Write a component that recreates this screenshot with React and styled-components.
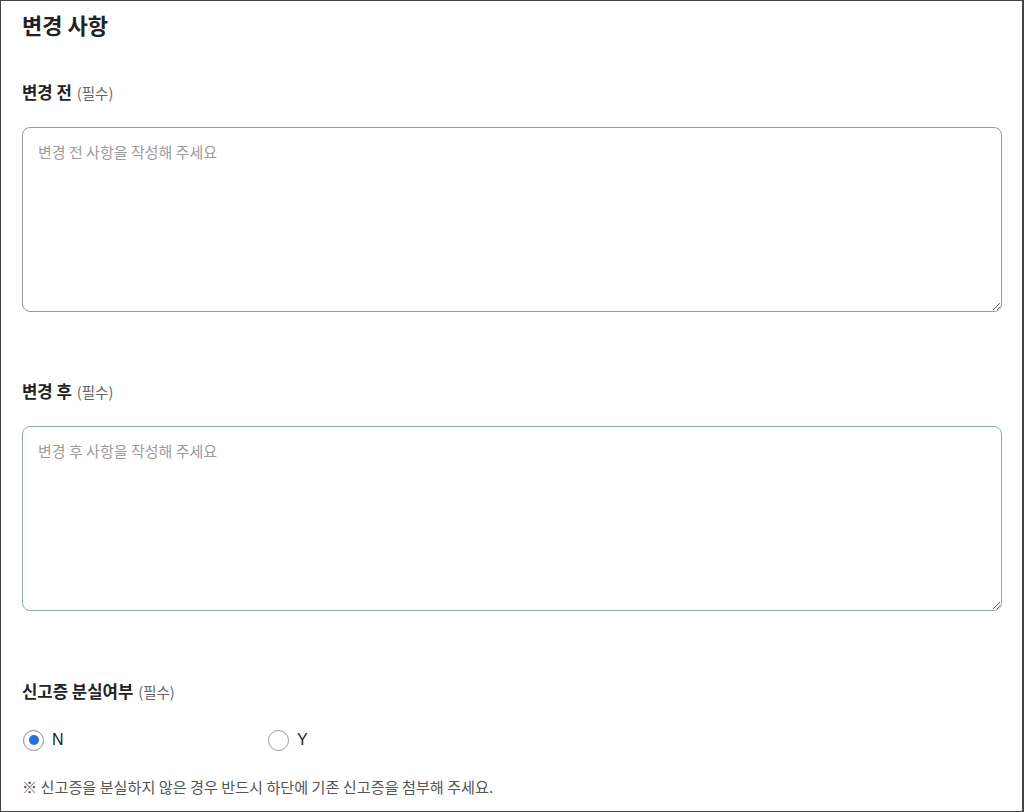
import React, { useState } from "react";
import styled, { createGlobalStyle } from "styled-components";

const GlobalStyle = createGlobalStyle`
  html, body {
    margin: 0;
    padding: 0;
    background: #fff;
  }
  * {
    box-sizing: border-box;
  }
  body {
    font-family: "Noto Sans CJK KR", "Noto Sans", "Liberation Sans", sans-serif;
    color: #222;
  }
`;

const Frame = styled.div`
  width: 1024px;
  height: 812px;
  border: 1px solid #444;
  border-right-width: 2px;
  padding: 9px 20px 0 21px;
  overflow: hidden;
`;

const Title = styled.h2`
  margin: 0;
  font-size: 22px;
  line-height: 28px;
  font-weight: 700;
  color: #222;
`;

const Field = styled.div`
  margin-top: ${(p) => p.$top}px;
`;

const Label = styled.div`
  font-size: 16.7px;
  line-height: 20px;
  font-weight: 700;
  color: #222;
`;

const Required = styled.span`
  font-size: 14.5px;
  font-weight: 400;
  color: #666;
  margin-left: 5px;
`;

const TextArea = styled.textarea`
  display: block;
  width: 980px;
  height: 185px;
  margin-top: 24px;
  padding: 14px 15px;
  border: 1px solid ${(p) => (p.$active ? "#8aa6bc" : "#9a9a9a")};
  border-radius: 8px;
  font-family: inherit;
  font-size: 15px;
  line-height: 20px;
  color: #222;
  resize: vertical;
  outline: none;

  &::placeholder {
    color: #9b9b9b;
  }
`;

const RadioRow = styled.div`
  display: grid;
  grid-template-columns: 245px 245px;
  margin-top: 28px;
`;

const RadioOption = styled.label`
  display: flex;
  align-items: center;
  gap: 8px;
  height: 20px;
  padding-left: 1px;
  font-family: "Liberation Sans", "Noto Sans CJK KR", sans-serif;
  font-size: 16px;
  color: #222;
  cursor: pointer;
`;

const Circle = styled.span`
  width: 21px;
  height: 21px;
  border-radius: 50%;
  border: 1px solid ${(p) => (p.$checked ? "#7c8aa0" : "#9a9a9a")};
  display: flex;
  align-items: center;
  justify-content: center;
  background: #fff;

  &::after {
    content: "";
    width: 10px;
    height: 10px;
    border-radius: 50%;
    background: ${(p) => (p.$checked ? "#2d6ed8" : "transparent")};
  }
`;

const HiddenInput = styled.input`
  display: none;
`;

const Note = styled.p`
  margin: 26px 0 0;
  font-size: 15.15px;
  line-height: 20px;
  color: #555;
`;

export default function App() {
  const [lost, setLost] = useState("N");

  return (
    <>
      <GlobalStyle />
      <Frame>
        <Title>변경 사항</Title>

        <Field $top={44}>
          <Label>
            변경 전<Required>(필수)</Required>
          </Label>
          <TextArea placeholder="변경 전 사항을 작성해 주세요" />
        </Field>

        <Field $top={69}>
          <Label>
            변경 후<Required>(필수)</Required>
          </Label>
          <TextArea $active placeholder="변경 후 사항을 작성해 주세요" />
        </Field>

        <Field $top={70}>
          <Label>
            신고증 분실여부<Required>(필수)</Required>
          </Label>
          <RadioRow>
            {["N", "Y"].map((v) => (
              <RadioOption key={v}>
                <HiddenInput
                  type="radio"
                  name="lost"
                  value={v}
                  checked={lost === v}
                  onChange={() => setLost(v)}
                />
                <Circle $checked={lost === v} />
                {v}
              </RadioOption>
            ))}
          </RadioRow>
          <Note>※ 신고증을 분실하지 않은 경우 반드시 하단에 기존 신고증을 첨부해 주세요.</Note>
        </Field>
      </Frame>
    </>
  );
}
